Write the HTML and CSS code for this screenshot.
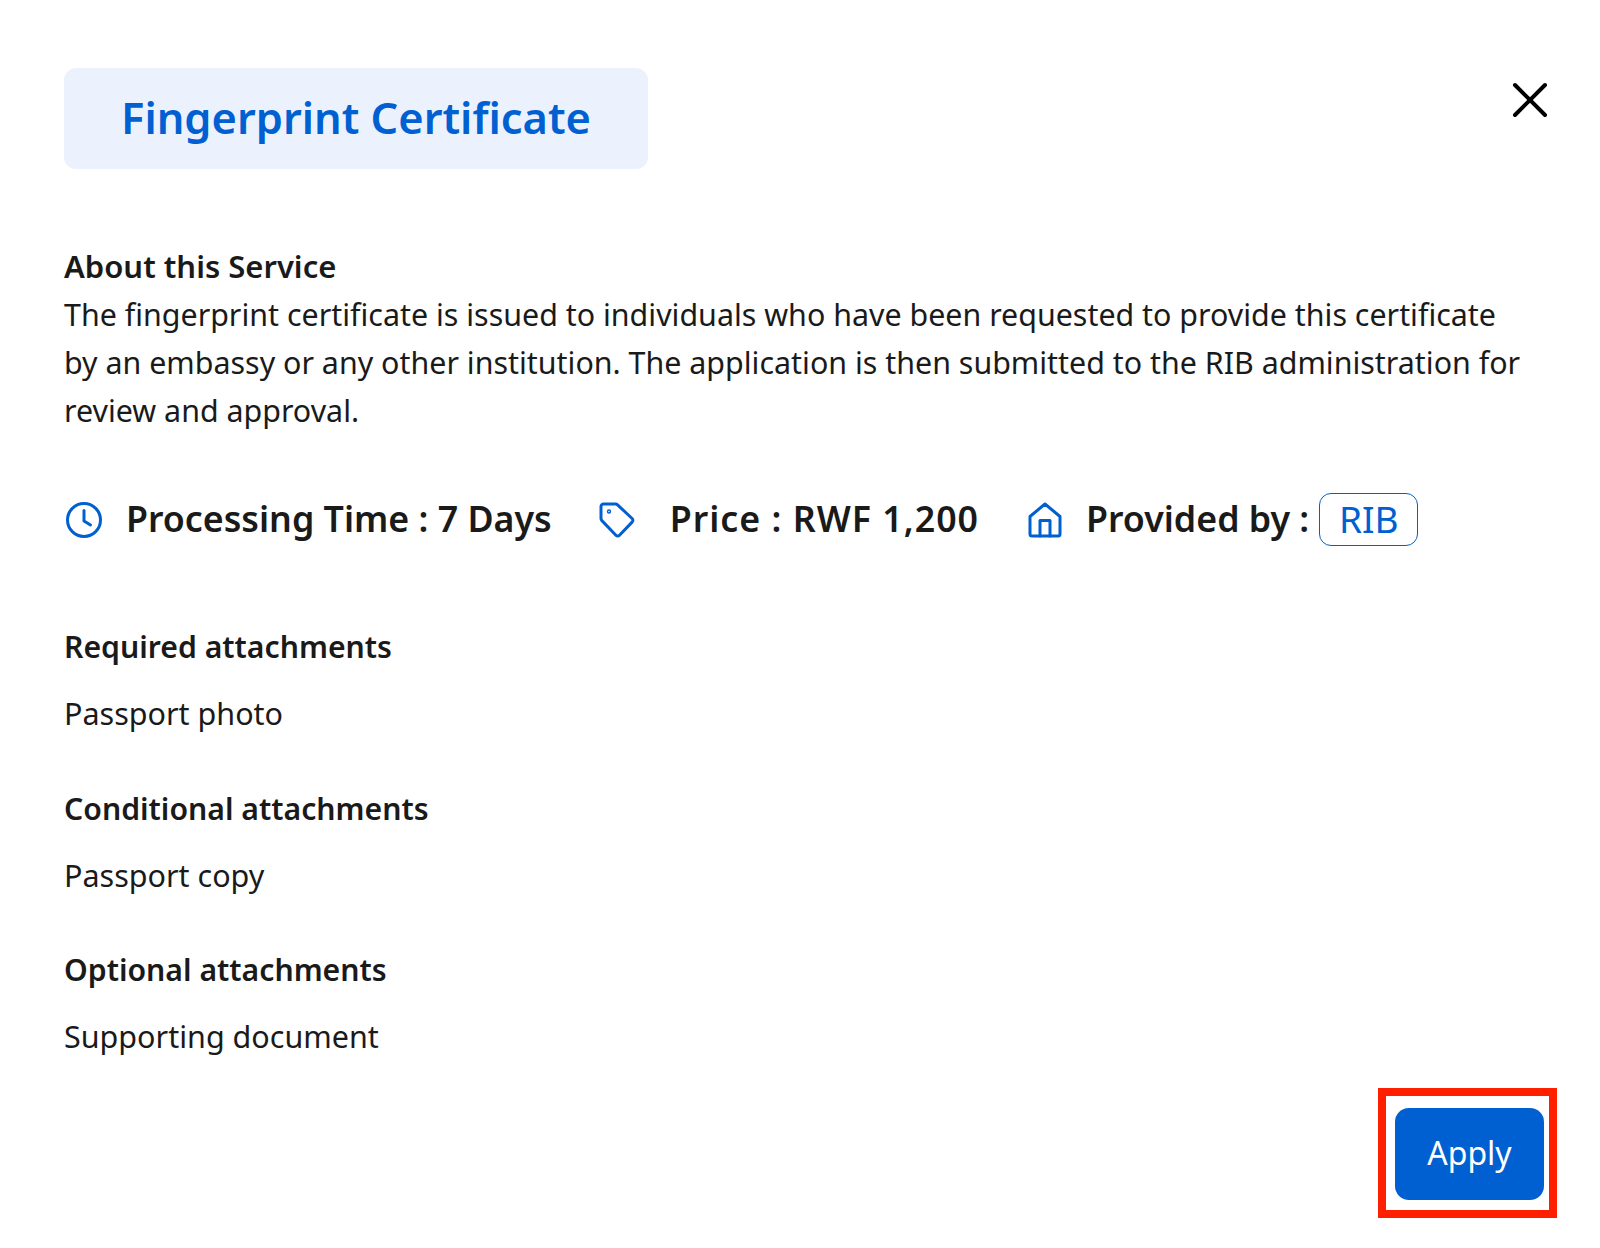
FILE: index.html
```html
<!DOCTYPE html>
<html lang="en">
<head>
  <meta charset="UTF-8" />
  <title>Fingerprint Certificate</title>
  <link rel="stylesheet" href="styles.css">
</head>
<body>
  <div class="modal">
    <div class="modal-head">
      <h1 class="title">Fingerprint Certificate</h1>
      <button class="close" aria-label="Close">
        <svg width="36" height="36" viewBox="0 0 36 36" fill="none" stroke="#000" stroke-width="4" stroke-linecap="round"><path d="M3 3l30 30M33 3L3 33"/></svg>
      </button>
    </div>

    <section class="about">
      <h2>About this Service</h2>
      <p>The fingerprint certificate is issued to individuals who have been requested to provide this certificate by an embassy or any other institution. The application is then submitted to the RIB administration for review and approval.</p>
    </section>

    <div class="meta">
      <div class="meta-item time">
        <svg width="38" height="38" viewBox="0 0 38 38" fill="none" stroke="#0060d1" stroke-width="3" stroke-linecap="round" stroke-linejoin="round"><circle cx="19" cy="19" r="16.5"/><path d="M19 9.5V20l6.5 4"/></svg>
        <span>Processing Time : 7 Days</span>
      </div>
      <div class="meta-item price">
        <svg width="38" height="38" viewBox="0 0 38 38" fill="none" stroke="#0060d1" stroke-width="3" stroke-linecap="round" stroke-linejoin="round"><path d="M3 5.500A2.500 2.500 0 0 1 5.500 3H17.500a3 3 0 0 1 2.100.9l14.500 13.600a2.500 2.500 0 0 1 0 3.600L21.500 34.200a2.500 2.500 0 0 1-3.600 0L3.900 19.600A3 3 0 0 1 3 17.500z"/><circle cx="11" cy="10.500" r="0.700"/></svg>
        <span>Price : RWF 1,200</span>
      </div>
      <div class="meta-item provider">
        <svg width="36" height="38" viewBox="0 0 36 38" fill="none" stroke="#0060d1" stroke-width="3" stroke-linecap="round" stroke-linejoin="round"><path d="M3 15.500L18 3l15 12.500V33a2 2 0 0 1-2 2H5a2 2 0 0 1-2-2z"/><path d="M13 35V19.500h10V35"/></svg>
        <span>Provided by :</span>
        <span class="badge">RIB</span>
      </div>
    </div>

    <section class="attach first">
      <h3>Required attachments</h3>
      <p>Passport photo</p>
    </section>
    <section class="attach">
      <h3>Conditional attachments</h3>
      <p>Passport copy</p>
    </section>
    <section class="attach">
      <h3>Optional attachments</h3>
      <p>Supporting document</p>
    </section>

    <div class="actions">
      <div class="highlight">
        <button class="apply">Apply</button>
      </div>
    </div>
  </div>
</body>
</html>
```

FILE: styles.css
```css
* {
  box-sizing: border-box;
}

body {
  margin: 0;
  background: #fff;
  color: #1a1a1a;
  font-family: "Noto Sans", "Open Sans", sans-serif;
}

.modal {
  width: 1600px;
  height: 1248px;
  padding: 68px 43px 0 64px;
}

.modal-head {
  display: flex;
  justify-content: space-between;
  align-items: flex-start;
}

.title {
  margin: 0;
  width: 584px;
  height: 101px;
  padding-bottom: 3px;
  display: flex;
  align-items: center;
  justify-content: center;
  background: #ebf2fd;
  border-radius: 12px;
  color: #0060d1;
  font-size: 43.400px;
  font-weight: 600;
}

.close {
  padding: 0;
  margin: 14px 9px 0 0;
  border: none;
  background: none;
  display: block;
}

.about {
  margin-top: 72px;
  width: 1470px;
}

.about h2 {
  margin: 0;
  font-size: 31px;
  line-height: 50px;
  font-weight: 600;
}

.about p {
  margin: 0;
  font-size: 30.400px;
  line-height: 48px;
}

.meta {
  margin-top: 58px;
  display: flex;
  align-items: center;
  gap: 46px;
  height: 53px;
}

.meta-item {
  display: flex;
  align-items: center;
  font-size: 35.750px;
  font-weight: 600;
}

.meta-item span {
  padding-bottom: 3px;
}

.meta-item svg {
  margin-right: 24px;
}

.time svg {
  margin-left: 1px;
  margin-right: 23px;
}

.price svg {
  margin-right: 34px;
}

.price span {
  letter-spacing: 1px;
}

.provider {
  margin-left: 2px;
}

.provider svg {
  margin-right: 23px;
}

.badge {
  margin-left: 10px;
  width: 99px;
  height: 53px;
  display: flex;
  align-items: center;
  justify-content: center;
  border: 1.500px solid #0060d1;
  border-radius: 12px;
  color: #0060d1;
  font-size: 37px;
  font-weight: 400;
}

.attach {
  margin-top: 45.500px;
}

.attach.first {
  margin-top: 76px;
}

.attach h3 {
  margin: 0;
  font-size: 30.200px;
  line-height: 50px;
  font-weight: 600;
}

.attach p {
  margin: 16px 0 0;
  font-size: 30.500px;
  line-height: 50px;
}

.actions {
  display: flex;
  justify-content: flex-end;
  margin-top: 27px;
}

.highlight {
  width: 179px;
  height: 130px;
  padding: 12px 5px 10px 9px;
  border: 8px solid #ff2000;
}

.apply {
  width: 100%;
  height: 100%;
  padding: 0 0 3px;
  border: none;
  border-radius: 14px;
  background: #0060d1;
  color: #fff;
  font-family: inherit;
  font-size: 32px;
}
```
